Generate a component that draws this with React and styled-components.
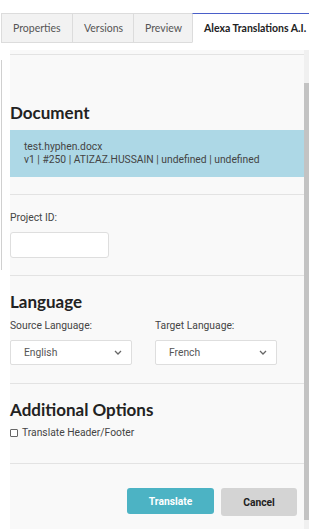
import React from 'react'
import styled, { createGlobalStyle } from 'styled-components'

const Global = createGlobalStyle`
  body { margin: 0; background: #fff; }
  * { box-sizing: border-box; }
`

const Page = styled.div`
  width: 309px;
  height: 529px;
  overflow: hidden;
  padding-top: 13px;
  background: #fff;
  font-family: Roboto, "Liberation Sans", Arial, sans-serif;
`

const TabBar = styled.div`
  display: flex;
  height: 30px;
  margin-left: 1px;
`

const Tab = styled.div`
  width: ${p => p.w}px;
  flex-shrink: 0;
  display: flex;
  align-items: center;
  padding-left: 11px;
  font-family: Lato, "Open Sans", sans-serif;
  font-size: 10.5px;
  white-space: nowrap;
  color: ${p => p.active ? '#222' : '#555'};
  font-weight: ${p => p.active ? 700 : 400};
  background: ${p => p.active ? '#fff' : '#f2f2f2'};
  border-top: 1px solid ${p => p.active ? '#4a5fc9' : '#dcdcdc'};
  border-left: 1px solid #dcdcdc;
  border-bottom: 1px solid ${p => p.active ? 'transparent' : '#dcdcdc'};
`

const Body = styled.div`
  display: flex;
  height: 486px;
  padding-top: 7px;
`

const Gutter = styled.div`
  width: 10px;
  flex-shrink: 0;
  padding-top: 10px;
`

const GutterLine = styled.div`
  width: 1px;
  height: 210px;
  margin-left: 1px;
  background: #d0d0d0;
`

const Panel = styled.div`
  flex: 1;
  background: #f9f9f9;
  padding-top: 4px;
`

const Scroll = styled.div`
  width: 5px;
  flex-shrink: 0;
  background: #f0f0f0;
  padding-top: 33px;
  padding-bottom: 9px;
  display: flex;
`

const Thumb = styled.div`
  flex: 1;
  background: #c3c3c3;
`

const Divider = styled.div`
  height: 1px;
  background: #e3e3e3;
`

const Section = styled.div`
  padding-top: ${p => p.top}px;
  padding-bottom: ${p => p.bottom}px;
`

const Heading = styled.div`
  font-family: Lato, "Open Sans", sans-serif;
  font-weight: 700;
  font-size: 17px;
  line-height: 20px;
  color: #222;
`

const InfoBox = styled.div`
  margin-top: 7px;
  background: #add8e6;
  padding: 10px 14px 11px;
  font-size: 10.3px;
  line-height: 13px;
  color: #444;
`

const Label = styled.div`
  font-size: 10.3px;
  line-height: 14px;
  color: #444;
`

const TextInput = styled.input`
  display: block;
  margin-top: 7px;
  width: 99px;
  height: 26px;
  background: #fff;
  border: 1px solid #dedede;
  border-radius: 3px;
  outline: none;
`

const Row = styled.div`
  display: flex;
  margin-top: 7px;
`

const Field = styled.div`
  width: 145px;
`

const Select = styled.div`
  margin-top: 7px;
  width: 122px;
  height: 25px;
  background: #fff;
  border: 1px solid #dedede;
  border-radius: 2px;
  display: flex;
  align-items: center;
  justify-content: space-between;
  padding: 0 9px 0 13px;
  font-size: 10.3px;
  color: #555;
`

const Check = styled.label`
  display: flex;
  align-items: center;
  gap: 4px;
  margin-top: 6px;
  font-size: 10.3px;
  line-height: 14px;
  color: #444;
`

const Box = styled.span`
  width: 8px;
  height: 8px;
  border: 1px solid #666;
  border-radius: 1px;
  background: #fff;
`

const Actions = styled.div`
  display: flex;
  justify-content: flex-end;
  gap: 7px;
  padding: 24px 7px 0 0;
`

const Button = styled.button`
  width: ${p => p.w}px;
  height: ${p => p.h}px;
  border: none;
  border-radius: 3px;
  font-family: Roboto, "Liberation Sans", Arial, sans-serif;
  font-weight: 700;
  font-size: 10.3px;
  color: ${p => p.primary ? '#fff' : '#222'};
  background: ${p => p.primary ? '#4cb3c4' : '#d4d4d4'};
`

const Chevron = () => (
  <svg width="8" height="5" viewBox="0 0 8 5">
    <path d="M1 1l3 3 3-3" fill="none" stroke="#666" strokeWidth="1.3" />
  </svg>
)

export default function App() {
  return (
    <Page>
      <Global />
      <TabBar>
        <Tab w={71}>Properties</Tab>
        <Tab w={61}>Versions</Tab>
        <Tab w={59}>Preview</Tab>
        <Tab w={118} active>Alexa Translations A.I.</Tab>
      </TabBar>
      <Body>
        <Gutter><GutterLine /></Gutter>
        <Panel>
          <Divider />
          <Section top={48} bottom={17}>
            <Heading>Document</Heading>
            <InfoBox>
              <div>test.hyphen.docx</div>
              <div>v1 | #250 | ATIZAZ.HUSSAIN | undefined | undefined</div>
            </InfoBox>
          </Section>
          <Divider />
          <Section top={16} bottom={17}>
            <Label>Project ID:</Label>
            <TextInput />
          </Section>
          <Divider />
          <Section top={16} bottom={18}>
            <Heading>Language</Heading>
            <Row>
              <Field>
                <Label>Source Language:</Label>
                <Select>English<Chevron /></Select>
              </Field>
              <Field>
                <Label>Target Language:</Label>
                <Select>French<Chevron /></Select>
              </Field>
            </Row>
          </Section>
          <Divider />
          <Section top={16} bottom={23}>
            <Heading>Additional Options</Heading>
            <Check><Box />Translate Header/Footer</Check>
          </Section>
          <Divider />
          <Actions>
            <Button primary w={87} h={26}>Translate</Button>
            <Button w={76} h={28}>Cancel</Button>
          </Actions>
        </Panel>
        <Scroll><Thumb /></Scroll>
      </Body>
    </Page>
  )
}
